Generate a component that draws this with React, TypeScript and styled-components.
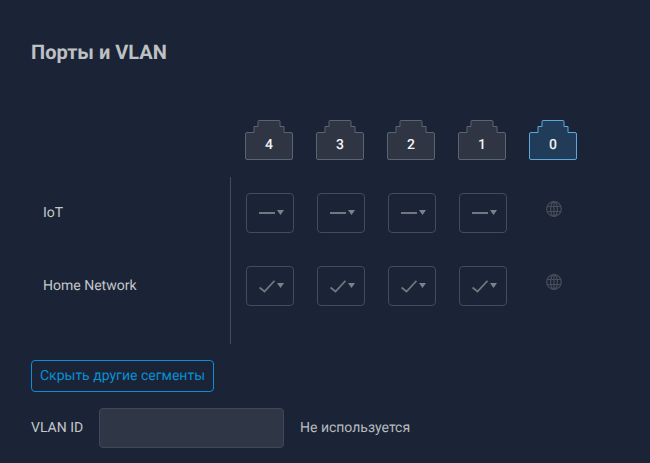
import styled, { createGlobalStyle } from 'styled-components';

const GlobalStyle = createGlobalStyle`
  html, body {
    margin: 0;
    height: 100%;
    background: #1a2436;
  }
`;

const PORTS = [
  { id: 4, isActive: false },
  { id: 3, isActive: false },
  { id: 2, isActive: false },
  { id: 1, isActive: false },
  { id: 0, isActive: true },
];

const SEGMENTS = [
  { name: 'IoT', mode: 'dash' },
  { name: 'Home Network', mode: 'check' },
];

function PortIcon({ id, isActive }: { id: number; isActive: boolean }) {
  return (
    <StyledPort>
      <svg width="48" height="40" viewBox="0 0 48 40">
        <path
          d="M14 .5H34a1 1 0 0 1 1 1V6.5H39V12.5H46a1.5 1.5 0 0 1 1.5 1.5V38a1.5 1.5 0 0 1-1.5 1.5H2A1.5 1.5 0 0 1 .5 38V14A1.5 1.5 0 0 1 2 12.5H9V6.5H13V1.5a1 1 0 0 1 1-1Z"
          fill={isActive ? '#203c58' : '#2f3542'}
          stroke={isActive ? '#5fa8dc' : '#5a6573'}
        />
      </svg>
      <StyledPortNumber>{id}</StyledPortNumber>
    </StyledPort>
  );
}

function Caret() {
  return (
    <svg width="7" height="5" viewBox="0 0 7 5">
      <path d="M0 0H7L3.5 5Z" fill="#7c828c" />
    </svg>
  );
}

function ModeIcon({ mode }: { mode: string }) {
  if (mode === 'check') {
    return (
      <svg width="16" height="13" viewBox="0 0 16 13">
        <path d="M.5 7.5L5.5 11.5L15.5 .8" fill="none" stroke="#72777f" strokeWidth="1.8" />
      </svg>
    );
  }
  return (
    <svg width="16" height="2" viewBox="0 0 16 2">
      <rect width="16" height="2" fill="#72777f" />
    </svg>
  );
}

function Globe() {
  return (
    <svg width="16" height="16" viewBox="0 0 16 16" fill="none" stroke="#484e59" strokeWidth="1.2">
      <circle cx="8" cy="8" r="7.3" />
      <ellipse cx="8" cy="8" rx="3.4" ry="7.3" />
      <path d="M8 .8V15.2M1 5.5H15M1 10.5H15" />
    </svg>
  );
}

function App() {
  return (
    <StyledPage>
      <GlobalStyle />
      <StyledTitle>Порты и VLAN</StyledTitle>
      <StyledPortsRow>
        {PORTS.map((port) => (
          <PortIcon key={port.id} id={port.id} isActive={port.isActive} />
        ))}
      </StyledPortsRow>
      <StyledMatrix>
        <StyledLabels>
          {SEGMENTS.map((segment) => (
            <StyledSegmentName key={segment.name}>{segment.name}</StyledSegmentName>
          ))}
        </StyledLabels>
        <StyledRows>
          {SEGMENTS.map((segment) => (
            <StyledRow key={segment.name}>
              {PORTS.slice(0, 4).map((port) => (
                <StyledSelect key={port.id}>
                  <ModeIcon mode={segment.mode} />
                  <Caret />
                </StyledSelect>
              ))}
              <StyledGlobeCell>
                <Globe />
              </StyledGlobeCell>
            </StyledRow>
          ))}
        </StyledRows>
      </StyledMatrix>
      <StyledToggle>Скрыть другие сегменты</StyledToggle>
      <StyledVlanRow>
        <StyledVlanLabel>VLAN ID</StyledVlanLabel>
        <StyledVlanInput disabled />
        <StyledVlanStatus>Не используется</StyledVlanStatus>
      </StyledVlanRow>
    </StyledPage>
  );
}

const StyledPage = styled.div`
  box-sizing: border-box;
  width: 650px;
  height: 463px;
  padding: 41px 0 0 31px;
  overflow: hidden;
  background: #1a2436;
  color: #c2c4c8;
  font-family: Roboto, 'Liberation Sans', sans-serif;
  font-size: 14px;
  text-rendering: geometricPrecision;
`;

const StyledTitle = styled.h1`
  margin: 0;
  height: 22px;
  color: #bfc0c3;
  font-size: 20px;
  font-weight: 700;
  line-height: 22px;
`;

const StyledPortsRow = styled.div`
  display: flex;
  gap: 23px;
  margin-top: 57px;
  padding-left: 214px;
`;

const StyledPort = styled.div`
  position: relative;
  width: 48px;
  height: 40px;

  svg {
    display: block;
  }
`;

const StyledPortNumber = styled.span`
  position: absolute;
  left: 0;
  right: 0;
  top: 17px;
  color: #f0f2f4;
  font-size: 14px;
  font-weight: 500;
  line-height: 16px;
  text-align: center;
`;

const StyledMatrix = styled.div`
  display: flex;
  margin-top: 17px;
`;

const StyledLabels = styled.div`
  box-sizing: border-box;
  width: 200px;
  height: 167px;
  padding: 16px 0 0 12px;
  border-right: 1px solid #454c59;
`;

const StyledSegmentName = styled.div`
  height: 40px;
  margin-bottom: 33px;
  color: #c4c6ca;
  font-size: 14px;
  font-weight: 400;
  line-height: 40px;
`;

const StyledRows = styled.div`
  display: flex;
  flex-direction: column;
  gap: 33px;
  padding: 16px 0 0 15px;
`;

const StyledRow = styled.div`
  display: flex;
  gap: 23px;
`;

const StyledSelect = styled.div`
  box-sizing: border-box;
  display: flex;
  align-items: center;
  gap: 2px;
  width: 48px;
  height: 40px;
  padding-left: 12px;
  border: 1px solid #454b57;
  border-radius: 4px;

  svg:last-child {
    margin-bottom: 1px;
  }
`;

const StyledGlobeCell = styled.div`
  display: flex;
  justify-content: center;
  width: 48px;
  padding-top: 8px;
`;

const StyledToggle = styled.button`
  display: block;
  box-sizing: border-box;
  width: 183px;
  height: 32px;
  margin-top: 16px;
  padding: 0;
  border: 1px solid #0b8ed4;
  border-radius: 4px;
  background: transparent;
  color: #0b8ed4;
  font-family: inherit;
  font-size: 14px;
  text-align: center;
  text-rendering: geometricPrecision;
`;

const StyledVlanRow = styled.div`
  display: flex;
  align-items: center;
  margin-top: 16px;
`;

const StyledVlanLabel = styled.span`
  width: 68px;
  color: #c4c6ca;
  font-weight: 400;
`;

const StyledVlanInput = styled.input`
  box-sizing: border-box;
  width: 185px;
  height: 40px;
  border: 1px solid #414855;
  border-radius: 4px;
  background: #2f3645;
`;

const StyledVlanStatus = styled.span`
  margin-left: 16px;
  color: #b9bbbf;
`;

export default App;
